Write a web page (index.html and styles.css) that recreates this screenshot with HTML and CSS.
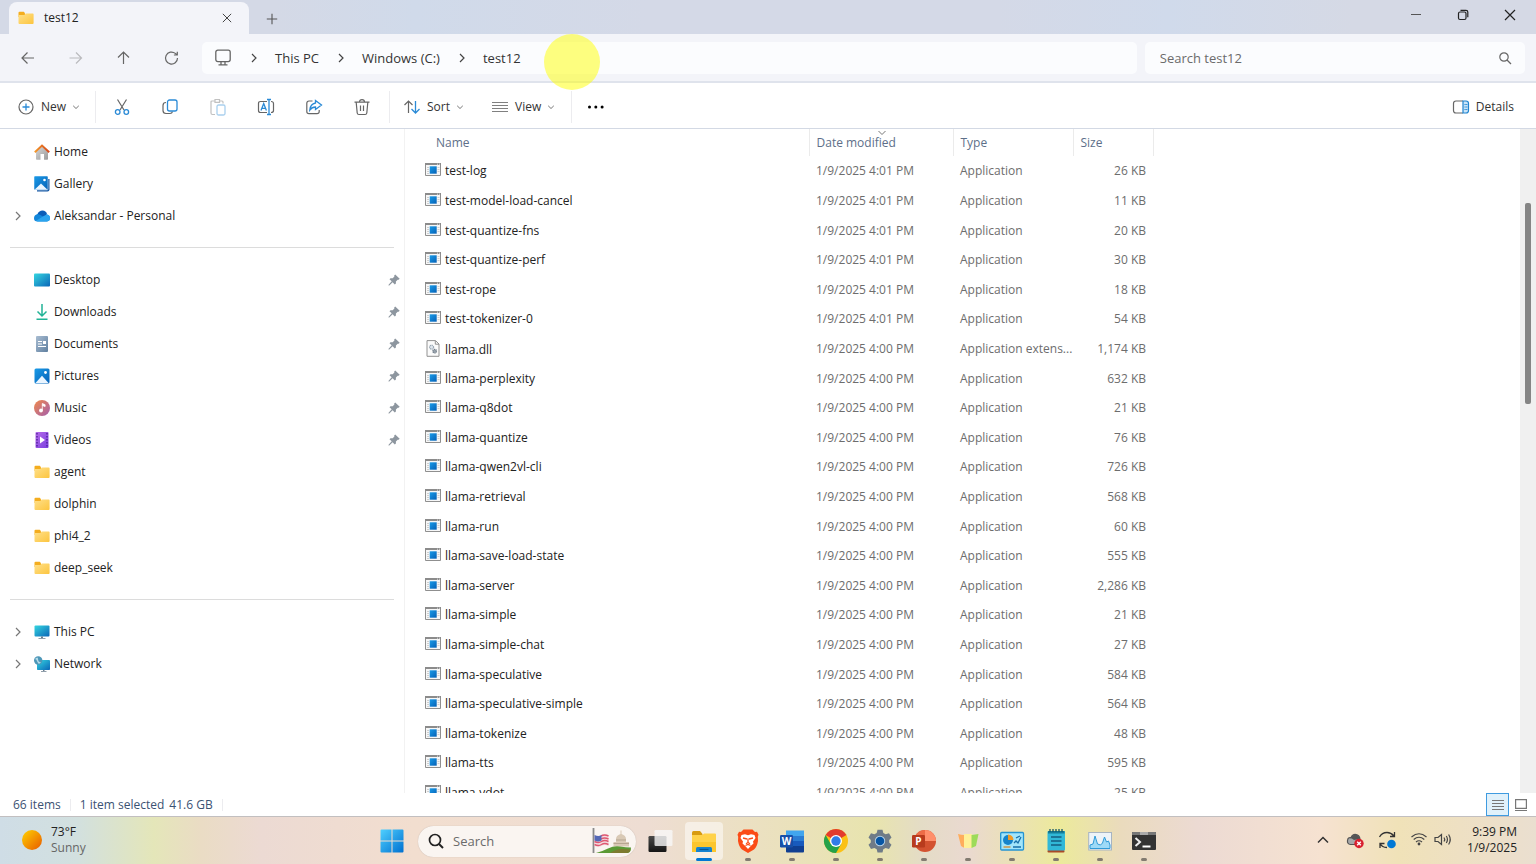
FILE: index.html
```html
<!DOCTYPE html>
<html lang="en">
<head>
<meta charset="utf-8">
<title>test12 - File Explorer</title>
<link rel="stylesheet" href="styles.css">
</head>
<body>
<svg class="defs" aria-hidden="true">
  <defs>
    <linearGradient id="gFolder" x1="0" y1="0" x2="1" y2="1"><stop offset="0" stop-color="#ffe08a"/><stop offset="1" stop-color="#fcc53f"/></linearGradient>
    <linearGradient id="gTeal" x1="0" y1="0" x2="1" y2="1"><stop offset="0" stop-color="#35d6e0"/><stop offset="1" stop-color="#0a66b8"/></linearGradient>
    <linearGradient id="gBlue" x1="0" y1="0" x2="1" y2="1"><stop offset="0" stop-color="#1a9be8"/><stop offset="1" stop-color="#0460b6"/></linearGradient>
    <linearGradient id="gHome" x1="0" y1="0" x2="1" y2="1"><stop offset="0" stop-color="#d8d8d8"/><stop offset="1" stop-color="#9b9b9b"/></linearGradient>
    <linearGradient id="gRoof" x1="0" y1="0" x2="1" y2="0"><stop offset="0" stop-color="#f59a2a"/><stop offset="1" stop-color="#d4471c"/></linearGradient>
    <linearGradient id="gMusic" x1="0" y1="0" x2="1" y2="1"><stop offset="0" stop-color="#f0894a"/><stop offset="1" stop-color="#a45fae"/></linearGradient>
    <linearGradient id="gVideo" x1="0" y1="0" x2="1" y2="1"><stop offset="0" stop-color="#b56ae8"/><stop offset="1" stop-color="#7a3fe0"/></linearGradient>
    <linearGradient id="gDoc" x1="0" y1="0" x2="1" y2="1"><stop offset="0" stop-color="#a9bdd2"/><stop offset="1" stop-color="#5f7f9f"/></linearGradient>
    <linearGradient id="gSun" x1="0" y1="0" x2="1" y2="1"><stop offset="0" stop-color="#ffd200"/><stop offset="1" stop-color="#e85a00"/></linearGradient>
    <linearGradient id="gWin" x1="0" y1="0" x2="1" y2="1"><stop offset="0" stop-color="#4fd0ff"/><stop offset="1" stop-color="#0070d0"/></linearGradient>
    <linearGradient id="gDark" x1="0" y1="0" x2="0" y2="1"><stop offset="0" stop-color="#4a4a4a"/><stop offset="1" stop-color="#151515"/></linearGradient>
  </defs>
  <symbol id="folder" viewBox="0 0 16 16"><path d="M.500 2.800q0-1 1-1h4.300l1.200 1.500V7H.5z" fill="#f4ad1e"/><path d="M.5 5h5.800l1.500-1.500h7q.8 0 .8.800v8.800q0 .9-.9.900H1.400q-.9 0-.9-.9z" fill="url(#gFolder)"/></symbol>
  <symbol id="exe" viewBox="0 0 16 14"><path d="M.5.500h15v12H.5z" fill="#f7f7f7" stroke="#8f8f8f"/><path d="M0 0h16v2H0z" fill="#8b8b8b"/><path d="M12 .7h1v.8h-1zM14 .7h1v.8h-1z" fill="#fff"/><path d="M4.700 3.300h7v7.400h-7z" fill="url(#gBlue)"/><path d="M2 4.500h2M2 6.500h2M2 8.500h2M2 10.500h2M12.500 4.500h2M12.500 6.500h2M12.500 8.500h2" stroke="#c4c4c4" stroke-width=".8"/></symbol>
  <symbol id="dll" viewBox="0 0 16 17"><path d="M2 .6h8.500L14 4v12.300H2z" fill="#fbfbfb" stroke="#929292"/><path d="M10.300.8V4.200H14" fill="none" stroke="#929292"/><circle cx="6.600" cy="7.200" r="2" fill="#dde5ec" stroke="#9aa7b3" stroke-width="1.200" stroke-dasharray="1.200 .5"/><circle cx="9.700" cy="11.200" r="1.800" fill="#9aa5af" stroke="#6f7b87" stroke-width="1.200" stroke-dasharray="1.200 .5"/></symbol>
  <symbol id="pin" viewBox="0 0 12 12"><path d="M7.200.4 11.700 4.800 10.600 5.800 9.700 5.700 7.900 7.500 7.900 9.600 6.800 10.500 4.600 8.300 1.300 11.400.500 11.400.6 10.700 3.700 7.300 1.500 5.300 2.500 4.200 4.700 4.200 6.400 2.500 6.200 1.400z" fill="#8d969f"/></symbol>
  <symbol id="chev" viewBox="0 0 10 10"><path d="M3 1l4 4-4 4" fill="none" stroke="currentColor" stroke-width="1.200"/></symbol>
  <symbol id="down" viewBox="0 0 8 8"><path d="M1.200 2.800 4 5.500l2.800-2.700" fill="none" stroke="#777" stroke-width="1"/></symbol>
  <symbol id="cross" viewBox="0 0 12 12"><path d="M1 1l10 10M11 1L1 11" fill="none" stroke="currentColor" stroke-width="1.200"/></symbol>
</svg>

<div class="window">
  <header class="titlebar">
    <div class="tab">
      <svg class="i16"><use href="#folder"/></svg>
      <span class="tab-name">test12</span>
      <button class="plain" aria-label="Close tab"><svg class="i10"><use href="#cross"/></svg></button>
    </div>
    <button class="plain new-tab" aria-label="New tab"><svg class="i12" viewBox="0 0 12 12"><path d="M6 .8v10.400M.8 6h10.400" stroke="#555" stroke-width="1.100"/></svg></button>
    <div class="window-buttons">
      <button class="plain" aria-label="Minimize"><svg class="i12" viewBox="0 0 12 12"><path d="M1 5.500h10" stroke="#555" stroke-width="1"/></svg></button>
      <button class="plain" aria-label="Restore"><svg class="i12" viewBox="0 0 12 12"><rect x="1.500" y="3" width="7.500" height="7.500" rx="1.500" fill="none" stroke="#222" stroke-width="1.200"/><path d="M3.500 1.300H9q1.800 0 1.800 1.800v5.200" fill="none" stroke="#222" stroke-width="1.200"/></svg></button>
      <button class="plain" aria-label="Close"><svg class="i12"><use href="#cross"/></svg></button>
    </div>
  </header>

  <nav class="navbar" aria-label="Navigation">
    <div class="history">
      <button class="plain" aria-label="Back"><svg class="i16" viewBox="0 0 16 16"><path d="M14 8H2M7.500 2.500 2 8l5.500 5.500" class="ln"/></svg></button>
      <button class="plain" aria-label="Forward" disabled><svg class="i16 faded" viewBox="0 0 16 16"><path d="M1.500 8H13.500M8 2.500 13.500 8l-5.500 5.500" class="ln"/></svg></button>
      <button class="plain" aria-label="Up"><svg class="i16" viewBox="0 0 16 16"><path d="M7.500 14V2M2 7.500 7.500 2l5.500 5.500" class="ln"/></svg></button>
      <button class="plain" aria-label="Refresh"><svg class="i16" viewBox="0 0 16 16"><path d="M13.500 8A6 6 0 1 1 11.300 3.400L13.200 5M13.300 1.700V5H9.900" class="ln"/></svg></button>
    </div>
    <div class="address">
      <svg class="i18" viewBox="0 0 18 18"><rect x="1.800" y="1.200" width="14.400" height="11.400" rx="2" fill="none" stroke="#666" stroke-width="1.300"/><path d="M7 12.600v3M11 12.600v3M4.500 15.800h9" stroke="#666" stroke-width="1.300" fill="none"/></svg>
      <svg class="i10 sep"><use href="#chev"/></svg>
      <button class="plain">This PC</button>
      <svg class="i10 sep"><use href="#chev"/></svg>
      <button class="plain">Windows (C:)</button>
      <svg class="i10 sep"><use href="#chev"/></svg>
      <button class="plain">test12</button>
      <span class="pointer-halo"></span>
    </div>
    <div class="search">
      <input type="search" placeholder="Search test12" aria-label="Search test12">
      <svg class="i14" viewBox="0 0 14 14"><circle cx="6" cy="6" r="4.200" class="ln"/><path d="M9 9l4 4" class="ln"/></svg>
    </div>
  </nav>

  <div class="toolbar" role="toolbar">
    <button class="tool new"><svg class="i18" viewBox="0 0 18 18"><circle cx="9" cy="9" r="7" class="ln"/><path d="M9 5.500v7M5.500 9h7" class="bl"/></svg>New<svg class="i8"><use href="#down"/></svg></button>
    <span class="rule"></span>
    <div class="actions">
      <button class="plain" aria-label="Cut"><svg class="i18" viewBox="0 0 18 18"><path d="M4.500 1.500 11 12M13.500 1.500 7 12" class="ln"/><circle cx="4.700" cy="14" r="2.300" class="bl"/><circle cx="13.300" cy="14" r="2.300" class="bl"/></svg></button>
      <button class="plain" aria-label="Copy"><svg class="i18" viewBox="0 0 18 18"><path d="M5 4.500Q2 4.500 2 7.500V12.500Q2 15.500 5 15.500H9Q11 15.500 11.500 13.500" class="ln"/><rect x="6.500" y="2" width="9.500" height="11" rx="2" class="bl"/></svg></button>
      <button class="plain" aria-label="Paste" disabled><svg class="i18 faded" viewBox="0 0 18 18"><path d="M6 3H3Q2 3 2 4V15Q2 16.500 3.500 16.500H6M11 3h2q1 0 1 1v1.500M6 1.500h4.500v2.800H6z" class="ln"/><rect x="8" y="7" width="8" height="10" rx="1.500" class="bl"/></svg></button>
      <button class="plain" aria-label="Rename"><svg class="i18" viewBox="0 0 18 18"><path d="M10 3.500H3.500Q1.500 3.500 1.500 5.500v7q0 2 2 2H10M14 3.500q2.500 0 2.500 2v7q0 2-2.500 2" class="ln"/><path d="M4 12.500 6.700 5.500 9.400 12.500M5 10.300h3.400M12 1.500v15M10 1.500h4M10 16.500h4" class="bl"/></svg></button>
      <button class="plain" aria-label="Share"><svg class="i18" viewBox="0 0 18 18"><path d="M7.500 3H4Q1.800 3 1.800 5.200v8.300q0 2.200 2.200 2.200h8q2.200 0 2.200-2.200V12" class="ln"/><path d="M10.500 2.500 16.500 7l-6 4.500V9Q7 9 4.800 12 5.300 6 10.500 5z" class="bl"/></svg></button>
      <button class="plain" aria-label="Delete"><svg class="i18" viewBox="0 0 18 18"><path d="M1.500 4.200h15M6.500 4Q6.500 1.700 9 1.700T11.500 4M3.200 4.500l1 10.500q.2 1.500 1.700 1.500h6.200q1.500 0 1.700-1.500l1-10.500M7.500 7.500v5.500M10.500 7.500v5.500" class="ln"/></svg></button>
    </div>
    <span class="rule"></span>
    <button class="tool sort"><svg class="i18" viewBox="0 0 18 18"><path d="M5.500 15V3M1.500 7l4-4 4 4" class="ln"/><path d="M12.500 3v12M8.500 11l4 4 4-4" class="bl"/></svg>Sort<svg class="i8"><use href="#down"/></svg></button>
    <button class="tool view"><svg class="i18" viewBox="0 0 18 18"><path d="M1 4.500h16M1 7.500h16M1 10.500h16M1 13.500h16" stroke="#808080" stroke-width="1.100"/></svg>View<svg class="i8"><use href="#down"/></svg></button>
    <span class="rule"></span>
    <button class="plain more" aria-label="See more"><svg class="i18" viewBox="0 0 18 18"><circle cx="2.500" cy="9" r="1.500"/><circle cx="8.800" cy="9" r="1.500"/><circle cx="15.100" cy="9" r="1.500"/></svg></button>
    <button class="tool details"><svg class="i18" viewBox="0 0 18 18"><path d="M11 3H4Q1.500 3 1.500 5.500v7Q1.500 15 4 15h7" class="ln"/><path d="M11 3h3q2.500 0 2.500 2.500v7Q16.500 15 14 15h-3z" fill="#c9e4f8" stroke="#1f84d0" stroke-width="1.200"/><path d="M12.500 6.500h3M12.500 9h3M12.500 11.500h3" stroke="#1f84d0" stroke-dasharray="1.200 .5"/></svg>Details</button>
  </div>

  <main class="content">
    <nav class="sidebar" aria-label="Folders">
      <ul>
        <li><a href="#"><svg class="i16 icon" viewBox="0 0 16 16"><path d="M2 7.500 8 2l6 5.500V15q0 .8-.8.800H10V10H6.500v5.800H2.800Q2 15.800 2 15z" fill="url(#gHome)"/><path d="M.8 8.200 8 1.500l7.200 6.700" fill="none" stroke="url(#gRoof)" stroke-width="2"/></svg>Home</a></li>
        <li><a href="#"><svg class="i16 icon" viewBox="0 0 16 16"><path d="M3 3h12.500v10.500q0 2-2 2H3z" fill="#1558a5"/><rect x="0" y="0" width="14" height="14" rx="1" fill="url(#gBlue)" stroke="#fff" stroke-width=".5"/><path d="M.5 13.700 7 7.500l6.500 6.200z" fill="#eaf5ff"/><circle cx="10.500" cy="4" r="1.300" fill="#fff"/></svg>Gallery</a></li>
        <li><a href="#"><svg class="i10 tree"><use href="#chev"/></svg><svg class="i16 icon" viewBox="0 0 16 16"><path d="M3.500 6Q5 2.500 8.500 2.500q3.500 0 4.500 3.500l-3 4-7.500-1z" fill="#0a5db8"/><path d="M3.500 13.500Q0 13.500 0 10.300T3.500 6Q5 5.800 9 8.500L13 6.500Q16 7 16 10t-3 3.500z" fill="#1286da"/><path d="M9 8.500 13 6.500Q16 7 16 10t-3 3.500H3.500L2 12.800z" fill="#2ba4ee"/></svg>Aleksandar - Personal</a></li>
      </ul>
      <hr>
      <ul>
        <li><a href="#"><svg class="i16 icon" viewBox="0 0 16 16"><rect y="1.500" width="16" height="13" rx="1" fill="url(#gTeal)"/></svg>Desktop<svg class="i12 pin"><use href="#pin"/></svg></a></li>
        <li><a href="#"><svg class="i16 icon" viewBox="0 0 16 16"><path d="M8 0v12M3.500 7.500 8 12l4.500-4.500M2.500 15.300h11" fill="none" stroke="#22b396" stroke-width="1.500"/></svg>Downloads<svg class="i12 pin"><use href="#pin"/></svg></a></li>
        <li><a href="#"><svg class="i16 icon" viewBox="0 0 16 16"><rect x="2" width="12" height="16" rx="1" fill="url(#gDoc)"/><path d="M4 5.500h4M4 8h4M4 10.500h8" stroke="#fff"/><path d="M9 5h3v3H9z" fill="#fff"/></svg>Documents<svg class="i12 pin"><use href="#pin"/></svg></a></li>
        <li><a href="#"><svg class="i16 icon" viewBox="0 0 16 16"><rect x=".5" y=".5" width="15" height="15" rx="1.500" fill="url(#gBlue)"/><path d="M1.500 15 8 7.800 14.500 15z" fill="#eaf5ff"/><circle cx="11.500" cy="4.500" r="1.400" fill="#fff"/></svg>Pictures<svg class="i12 pin"><use href="#pin"/></svg></a></li>
        <li><a href="#"><svg class="i16 icon" viewBox="0 0 16 16"><circle cx="8" cy="8" r="8" fill="url(#gMusic)"/><circle cx="7" cy="10.500" r="1.900" fill="#fff"/><path d="M8.300 10.500V3.500l2.800 1.200v1.800L8.300 5.500" fill="#fff" stroke="#fff" stroke-width=".8"/></svg>Music<svg class="i12 pin"><use href="#pin"/></svg></a></li>
        <li><a href="#"><svg class="i16 icon" viewBox="0 0 16 16"><rect x="1.500" width="13" height="16" rx="1" fill="url(#gVideo)"/><path d="M3 1v14M13 1v14" stroke="#4a1e95" stroke-width="1.300" stroke-dasharray="1.500 1.500"/><path d="M6 4.500 11 8l-5 3.500z" fill="#fff"/></svg>Videos<svg class="i12 pin"><use href="#pin"/></svg></a></li>
        <li><a href="#"><svg class="i16 icon"><use href="#folder"/></svg>agent</a></li>
        <li><a href="#"><svg class="i16 icon"><use href="#folder"/></svg>dolphin</a></li>
        <li><a href="#"><svg class="i16 icon"><use href="#folder"/></svg>phi4_2</a></li>
        <li><a href="#"><svg class="i16 icon"><use href="#folder"/></svg>deep_seek</a></li>
      </ul>
      <hr>
      <ul>
        <li><a href="#"><svg class="i10 tree"><use href="#chev"/></svg><svg class="i16 icon" viewBox="0 0 16 16"><rect x=".5" y="1.500" width="15" height="11" rx="1" fill="url(#gTeal)"/><path d="M7 12.500h2v1.500h2.500v.8h-7V14H7z" fill="#6c7f8f"/></svg>This PC</a></li>
        <li><a href="#"><svg class="i10 tree"><use href="#chev"/></svg><svg class="i16 icon" viewBox="0 0 16 16"><rect x="3" y="4" width="13" height="10" rx=".8" fill="url(#gTeal)"/><path d="M9 14h1.500v1h2v.8h-5.500V15H9z" fill="#6c7f8f"/><circle cx="4.200" cy="4.500" r="4.200" fill="#4e97b8"/><path d="M1 3Q4 0 4 3T7 6.500Q4.500 9 3.500 6T1 3z" fill="#b7dce9"/></svg>Network</a></li>
      </ul>
    </nav>

    <section class="files">
      <table>
        <colgroup><col class="c-name"><col class="c-date"><col class="c-type"><col class="c-size"></colgroup>
        <thead><tr><th>Name</th><th><svg class="i8 sorted" viewBox="0 0 8 8"><path d="M.5 2 4 5.500 7.500 2" fill="none" stroke="#777"/></svg>Date modified</th><th>Type</th><th>Size</th></tr></thead>
        <tbody>
          <tr><td><svg class="exe"><use href="#exe"/></svg>test-log</td><td>1/9/2025 4:01 PM</td><td>Application</td><td>26 KB</td></tr>
          <tr><td><svg class="exe"><use href="#exe"/></svg>test-model-load-cancel</td><td>1/9/2025 4:01 PM</td><td>Application</td><td>11 KB</td></tr>
          <tr><td><svg class="exe"><use href="#exe"/></svg>test-quantize-fns</td><td>1/9/2025 4:01 PM</td><td>Application</td><td>20 KB</td></tr>
          <tr><td><svg class="exe"><use href="#exe"/></svg>test-quantize-perf</td><td>1/9/2025 4:01 PM</td><td>Application</td><td>30 KB</td></tr>
          <tr><td><svg class="exe"><use href="#exe"/></svg>test-rope</td><td>1/9/2025 4:01 PM</td><td>Application</td><td>18 KB</td></tr>
          <tr><td><svg class="exe"><use href="#exe"/></svg>test-tokenizer-0</td><td>1/9/2025 4:01 PM</td><td>Application</td><td>54 KB</td></tr>
          <tr><td><svg class="dll"><use href="#dll"/></svg>llama.dll</td><td>1/9/2025 4:00 PM</td><td>Application extens...</td><td>1,174 KB</td></tr>
          <tr><td><svg class="exe"><use href="#exe"/></svg>llama-perplexity</td><td>1/9/2025 4:00 PM</td><td>Application</td><td>632 KB</td></tr>
          <tr><td><svg class="exe"><use href="#exe"/></svg>llama-q8dot</td><td>1/9/2025 4:00 PM</td><td>Application</td><td>21 KB</td></tr>
          <tr><td><svg class="exe"><use href="#exe"/></svg>llama-quantize</td><td>1/9/2025 4:00 PM</td><td>Application</td><td>76 KB</td></tr>
          <tr><td><svg class="exe"><use href="#exe"/></svg>llama-qwen2vl-cli</td><td>1/9/2025 4:00 PM</td><td>Application</td><td>726 KB</td></tr>
          <tr><td><svg class="exe"><use href="#exe"/></svg>llama-retrieval</td><td>1/9/2025 4:00 PM</td><td>Application</td><td>568 KB</td></tr>
          <tr><td><svg class="exe"><use href="#exe"/></svg>llama-run</td><td>1/9/2025 4:00 PM</td><td>Application</td><td>60 KB</td></tr>
          <tr><td><svg class="exe"><use href="#exe"/></svg>llama-save-load-state</td><td>1/9/2025 4:00 PM</td><td>Application</td><td>555 KB</td></tr>
          <tr><td><svg class="exe"><use href="#exe"/></svg>llama-server</td><td>1/9/2025 4:00 PM</td><td>Application</td><td>2,286 KB</td></tr>
          <tr><td><svg class="exe"><use href="#exe"/></svg>llama-simple</td><td>1/9/2025 4:00 PM</td><td>Application</td><td>21 KB</td></tr>
          <tr><td><svg class="exe"><use href="#exe"/></svg>llama-simple-chat</td><td>1/9/2025 4:00 PM</td><td>Application</td><td>27 KB</td></tr>
          <tr><td><svg class="exe"><use href="#exe"/></svg>llama-speculative</td><td>1/9/2025 4:00 PM</td><td>Application</td><td>584 KB</td></tr>
          <tr><td><svg class="exe"><use href="#exe"/></svg>llama-speculative-simple</td><td>1/9/2025 4:00 PM</td><td>Application</td><td>564 KB</td></tr>
          <tr><td><svg class="exe"><use href="#exe"/></svg>llama-tokenize</td><td>1/9/2025 4:00 PM</td><td>Application</td><td>48 KB</td></tr>
          <tr><td><svg class="exe"><use href="#exe"/></svg>llama-tts</td><td>1/9/2025 4:00 PM</td><td>Application</td><td>595 KB</td></tr>
          <tr><td><svg class="exe"><use href="#exe"/></svg>llama-vdot</td><td>1/9/2025 4:00 PM</td><td>Application</td><td>25 KB</td></tr>
        </tbody>
      </table>
    </section>
    <div class="scrollbar"><div class="thumb"></div></div>
  </main>

  <footer class="status">
    <span>66 items</span><span class="rule small"></span><span class="selected">1 item selected</span><span>41.6 GB</span><span class="rule small"></span>
    <div class="layouts">
      <button class="layout on" aria-label="Details layout"><svg class="i12" viewBox="0 0 12 12"><path d="M0 1.500h12M0 4.500h12M0 7.500h12M0 10.500h12" stroke="#777"/></svg></button>
      <button class="layout" aria-label="Large icons layout"><svg class="i12" viewBox="0 0 12 12"><path d="M.6.600h10.800v8.800H.6zM0 11.500h12" fill="none" stroke="#777" stroke-width="1.200"/></svg></button>
    </div>
  </footer>
</div>

<div class="taskbar">
  <button class="weather">
    <svg class="i20" viewBox="0 0 20 20"><circle cx="10" cy="10" r="10" fill="url(#gSun)"/></svg>
    <span class="weather-text"><span>73°F</span><span class="muted">Sunny</span></span>
  </button>
  <div class="apps">
    <button class="app" aria-label="Start"><svg class="i24" viewBox="0 0 24 24"><path d="M.5 1.500q0-1 1-1h10v11H.5zM12.500.500h10q1 0 1 1v10h-11zM.5 12.500h11v11h-10q-1 0-1-1zM12.500 12.500h11v10q0 1-1 1h-10z" fill="url(#gWin)"/></svg></button>
    <div class="task-search">
      <svg class="i16" viewBox="0 0 16 16"><circle cx="7" cy="7" r="5.500" fill="none" stroke="#222" stroke-width="1.700"/><path d="M11 11l4 4" stroke="#222" stroke-width="2"/></svg>
      <input type="search" placeholder="Search" aria-label="Search Windows">
      <svg class="art" viewBox="0 0 40 26"><path d="M24 11q0-3.500 4.500-5V2.500h1V6q4.500 1.500 4.500 5v3h3v4.500H21.500V14H24z" fill="#d9c9b5"/><path d="M24 12h10M21.500 15.500H37" stroke="#a89781" stroke-width=".7"/><path d="M4 25Q10 23.500 16 20.500T28 18.500T39 19.500Q39 24 36 25z" fill="#5b9a35"/><path d="M18 25Q24 21 30 21T38.500 21.500Q38 24.500 35 25z" fill="#7d7b30"/><path d="M1.500 0v25" stroke="#8a8a8a" stroke-width="1.800"/><path d="M2.500 7q4 2 7 0t7 0v11q-4-2-7 0t-7 0z" fill="#f3dce0"/><path d="M2.500 13.500q4 2 7 0t7 0M2.500 16.500q4 2 7 0t7 0M9 8q3.500-2 7.500 0M9 11q3.500-2 7.500 0" stroke="#df5871" stroke-width="1.500" fill="none"/><path d="M2.500 7q4 2 7 0v5.500q-3 2-7 0z" fill="#5468b5"/></svg>
    </div>
    <button class="app" aria-label="Task view"><svg class="i24" viewBox="0 0 24 24"><rect x=".5" y="7" width="18" height="16" rx="1.200" fill="url(#gDark)"/><rect x="6.500" y="1" width="18" height="16" rx="1.200" fill="#f7f7f7" opacity=".8"/></svg></button>
    <button class="app active running" aria-label="File Explorer"><svg class="i26" viewBox="0 0 26 26"><path d="M1 4.500Q1 3 2.500 3H9l2.500 3v4H1z" fill="#d89b10"/><path d="M1 7h10.500L13 5.500h11q1 0 1 1V24H1z" fill="#ffd24a"/><path d="M1 14h24v10H1z" fill="#fcc62e"/><path d="M5 24v-3.500Q5 19 6.500 19h13q1.500 0 1.500 1.500V24z" fill="#1583d0"/><path d="M8.500 21.500h9" stroke="#075795" stroke-width="1.200"/></svg></button>
    <button class="app running" aria-label="Brave"><svg class="i24" viewBox="0 0 24 24"><path d="M7.500.5h9L19 3l2-.3 1.500 3-.7 2L22 12q-1 6-4 8.500L12 24 6 20.500Q3 18 2 12l.2-4.300-.7-2L3 2.700 5 3z" fill="#fb4b16"/><path d="M5.500 6 9 5.300l3 .9 3-.9 3.500.7 1 3-2.500 3.500.5 2-2.500 2.300L12 20l-3-3.200L6.500 14.500l.5-2L4.500 9z" fill="#fff"/><path d="M7 9l4 1M17 9l-4 1M12 9.500v4l-2 1.300M12 13.500l2 1.300M9.500 16.500 12 15.500l2.500 1" stroke="#fb4b16" stroke-width="1.300" fill="none"/></svg></button>
    <button class="app running" aria-label="Word"><svg class="i24" viewBox="0 0 24 24"><path d="M6 1.500h18v6H6z" fill="#41a5ee"/><path d="M6 7h18v5.500H6z" fill="#2b7cd3"/><path d="M6 12h18v5.500H6z" fill="#185abd"/><path d="M6 17h18v5.500q0 1-1 1H7q-1 0-1-1z" fill="#103f91"/><rect y="6" width="13" height="12.500" rx="1.200" fill="#174fa8"/><text x="6.500" y="16" class="letter">W</text></svg></button>
    <button class="app running" aria-label="Chrome"><svg class="i24" viewBox="0 0 24 24"><circle cx="12" cy="12" r="12" fill="#fbc116"/><path d="M12 12 1.600 6A12 12 0 0 1 22.400 6z" fill="#e33b2e"/><path d="M12 12 6.800 15 1.600 6A12 12 0 0 0 12 24l5.200-9z" fill="#25a24a"/><circle cx="12" cy="12" r="6" fill="#fff"/><circle cx="12" cy="12" r="4.700" fill="#317ce8"/></svg></button>
    <button class="app running" aria-label="Settings"><svg class="i24" viewBox="0 0 24 24"><path d="M9.500.700h5l.8 3.200 2.300 1.300L21 4.200l2.500 4.200L21.200 11v2.500l2.300 2.300L21 20l-3.400-1-2.300 1.300-.8 3.200h-5l-.8-3.200L6.400 19 3 20 .5 15.800 2.800 13.400V11L.5 8.400 3 4.200l3.400 1 2.300-1.300z" fill="#6f7b87"/><circle cx="12" cy="12" r="5.200" fill="#b9d4e9"/><circle cx="12" cy="12" r="4.300" fill="#0756a4"/></svg></button>
    <button class="app running" aria-label="PowerPoint"><svg class="i24" viewBox="0 0 24 24"><circle cx="13" cy="12" r="11" fill="#d35230"/><path d="M13 1a11 11 0 0 1 11 11H13z" fill="#ff8f6b"/><path d="M2 12a11 11 0 0 1 11-11v11z" fill="#ed6c47"/><rect y="6" width="13" height="12.500" rx="1.200" fill="#b83b1d"/><text x="6.500" y="16" class="letter">P</text></svg></button>
    <button class="app running" aria-label="Map"><svg class="i24" viewBox="0 0 24 24"><path d="M2 5q3 1 6.500 1v13L5 17z" fill="#ffad5c"/><path d="M8 5h8v14H8z" fill="#fff098"/><path d="M15.500 6 22.500 5 20 17l-4.500 2z" fill="#9ddb59"/></svg></button>
    <button class="app running" aria-label="Control Panel"><svg class="i24" viewBox="0 0 24 24"><rect x=".7" y="3.500" width="22.800" height="17.500" rx="1" fill="#a2e5fb" stroke="#2494d3" stroke-width="1.300"/><circle cx="8" cy="11" r="5" fill="#1683cb"/><path d="M8 11V5.500a5.500 5.500 0 0 1 5.500 5.500z" fill="#f29a25"/><path d="M3.500 18h7" stroke="#d98a2a" stroke-width="1.300"/><path d="M13 18h8M14 14l2-2 2 2 3-6M16 9l4-2" stroke="#176fa9" stroke-width="1.300" fill="none"/></svg></button>
    <button class="app running" aria-label="Notepad"><svg class="i24" viewBox="0 0 24 24"><rect x="3.500" y="21" width="17" height="2.500" rx="1" fill="#a84b28"/><rect x="3.500" y="2" width="17.500" height="19.500" rx="1" fill="#31b8d7"/><path d="M4 2h16.500v2.500H4z" fill="#137c98"/><path d="M6 0v3M9 0v3M12 0v3M15 0v3M18 0v3" stroke="#155766" stroke-width="1.300"/><path d="M7 8h10.500M7 12h10.500M7 16h10.500" stroke="#155e81" stroke-width="1.300"/></svg></button>
    <button class="app running" aria-label="Resource Monitor"><svg class="i24" viewBox="0 0 24 24"><rect x=".7" y="3.500" width="22.800" height="17.500" fill="#edf3f8" stroke="#a7b4c2"/><path d="M2 19.500V16l3-1 2-8 2.500 8 3 1 2-2 2-6 2 5 2-1 1.500 4v3.500z" fill="#9edaf7" stroke="#2f9ad7"/></svg></button>
    <button class="app running" aria-label="Terminal"><svg class="i24" viewBox="0 0 24 24"><rect y="3" width="24" height="18" rx="1" fill="#333"/><path d="M0 4q0-1 1-1h22q1 0 1 1v2H0z" fill="#777"/><path d="M8 3h8v3H8z" fill="#aaa"/><path d="M3.500 9 8 13l-4.500 4" stroke="#eee" stroke-width="2" fill="none"/><path d="M10.500 17.500h8" stroke="#fff" stroke-width="2"/></svg></button>
  </div>
  <div class="tray">
    <button class="plain up" aria-label="Show hidden icons"><svg class="i12" viewBox="0 0 12 12"><path d="M1 8.500 6 3.500l5 5" fill="none" stroke="#333" stroke-width="1.500"/></svg></button>
    <button class="plain" aria-label="OneDrive"><svg class="i18" viewBox="0 0 18 18"><path d="M4.500 13.500Q1 13 1.500 9.500T5 6.800Q6.500 3 10 3.500T14 8v5.500z" fill="#a7a9aa" stroke="#555" stroke-width="1.200"/><path d="M5 7Q7 3 10 3.500T14 8L8 9z" fill="#555"/><circle cx="13" cy="12.500" r="4.700" fill="#d8202f"/><path d="M11.200 10.700l3.600 3.600M14.800 10.700l-3.600 3.600" stroke="#fff" stroke-width="1.400"/></svg></button>
    <button class="plain" aria-label="Update"><svg class="i18" viewBox="0 0 18 18"><path d="M1.500 6Q4 1.500 9 1.500 13 1.500 16 5M16.500 1v4.500H12M2 17v-4.500h4.500M2 12.500Q4 16.500 9 16.500" fill="none" stroke="#333" stroke-width="1.300"/><circle cx="13.500" cy="13" r="4.300" fill="#0078d4"/></svg></button>
    <button class="plain net" aria-label="Network and volume">
      <svg class="i18" viewBox="0 0 18 18"><g fill="none" stroke="#444" stroke-width="1.200"><path d="M1.500 6q7.500-6.500 15 0M3.700 8.500q5.300-4.500 10.600 0M6 11q3-2.500 6 0"/></g><circle cx="9" cy="13" r="1.400" fill="#444"/></svg>
      <svg class="i18" viewBox="0 0 18 18"><g fill="none" stroke="#444" stroke-width="1.200"><path d="M1 6.500h3L7.500 3.500v10L4 10.500H1zM10 6.500q1.500 2 0 4M12.300 5q2.300 3.500 0 7M14.600 3.500q3.300 5 0 10"/></g></svg>
    </button>
    <button class="clock"><span>9:39 PM</span><span>1/9/2025</span></button>
  </div>
</div>
</body>
</html>
```
FILE: styles.css
```css
* { box-sizing: border-box; }
body {
  margin: 0;
  height: 100vh;
  display: flex;
  flex-direction: column;
  overflow: hidden;
  background: #fff;
  color: #222;
  font: 12px/16px "Open Sans", "Noto Sans", sans-serif;
}
button, input { font: inherit; color: inherit; border: 0; background: none; padding: 0; }
svg { display: block; flex: none; overflow: visible; }
.defs { position: absolute; width: 0; height: 0; }
.i8 { width: 8px; height: 8px; }
.i10 { width: 10px; height: 10px; }
.i12 { width: 12px; height: 12px; }
.i14 { width: 14px; height: 14px; }
.i16 { width: 16px; height: 16px; }
.i18 { width: 18px; height: 18px; }
.i20 { width: 20px; height: 20px; }
.i24 { width: 24px; height: 24px; }
.i26 { width: 26px; height: 26px; }
.ln { fill: none; stroke: #666; stroke-width: 1.2; }
.bl { fill: none; stroke: #2a8ad6; stroke-width: 1.3; }
.faded { opacity: .4; }
.plain { display: flex; align-items: center; justify-content: center; }
.letter { font: bold 10px "Open Sans", sans-serif; fill: #fff; text-anchor: middle; }

.window { flex: 1; min-height: 0; display: flex; flex-direction: column; }

.titlebar {
  display: flex;
  height: 34px;
  padding-left: 9px;
  background: linear-gradient(90deg, #d4d9e6 18%, #d0daea 27%, #d4d9e7 42%, #d4d9e7 65%, #d0daeb 76%, #d5d9e5 88%);
}
.tab {
  display: flex;
  align-items: center;
  width: 240px;
  margin-top: 2px;
  padding: 0 17px 0 9px;
  border-radius: 8px 8px 0 0;
  background: #f3f4f9;
}
.tab .plain { color: #444; }
.tab-name { flex: 1; padding-left: 10px; font-weight: 500; }
.new-tab { width: 46px; padding-top: 3px; }
.window-buttons { display: flex; margin-left: auto; padding: 0 3px 4px 0; }
.window-buttons button { width: 47px; }

.navbar {
  display: flex;
  align-items: center;
  height: 49px;
  padding: 0 11px 0 4px;
  gap: 8px;
  background: #f3f4f9;
  border-bottom: 2px solid #dfe3ec;
}
.history { display: flex; width: 190px; }
.history button { width: 48px; height: 32px; flex: none; }
.address, .search {
  display: flex;
  align-items: center;
  height: 32px;
  border-radius: 5px;
  background: #fbfcfe;
  color: #333;
  font-size: 13px;
}
.address { position: relative; flex: 1; padding-left: 12px; }
.sep { margin: 0 16px 0 17px; color: #444; }
.pointer-halo {
  position: absolute;
  left: 342px;
  top: -8px;
  width: 56px;
  height: 56px;
  border-radius: 50%;
  background: rgba(255, 255, 0, .5);
  z-index: 1;
}
.search { width: 25%; padding: 0 13px 0 15px; }
.search input { flex: 1; min-width: 0; outline: 0; }
input::placeholder { color: #6b6b6b; opacity: 1; }

.toolbar {
  display: flex;
  align-items: center;
  height: 46px;
  padding: 2px 22px 0 17px;
  border-bottom: 1px solid #d3d9e4;
  color: #333;
}
.tool { display: flex; align-items: center; gap: 6px; }
.rule { width: 1px; height: 32px; background: #ececef; }
.new { width: 78px; }
.actions { display: flex; padding: 0 3px 0 2px; }
.actions button { width: 48px; height: 32px; }
.sort { width: 88px; padding-left: 13px; }
.view { width: 93px; padding-left: 13px; }
.more { width: 48px; }
.details { margin-left: auto; }

.content { flex: 1; min-height: 0; display: flex; }
.sidebar { width: 405px; padding-top: 7px; border-right: 1px solid #f2f2f2; flex: none; overflow: hidden; }
.sidebar ul { list-style: none; margin: 0; padding: 0; }
.sidebar a {
  display: flex;
  align-items: center;
  height: 32px;
  padding: 0 4px 0 13px;
  color: #222;
  text-decoration: none;
}
.tree { color: #777; }
.icon { margin: 0 4px 0 21px; }
.tree + .icon { margin-left: 11px; }
.pin { margin-left: auto; }
.sidebar hr { height: 1px; margin: 15px 10px 16px; border: 0; background: #dcdcdc; }

.files { flex: 1; min-width: 0; overflow: hidden; }
table { table-layout: fixed; width: 748px; border-collapse: collapse; color: #6d6d6d; }
.c-name { width: 404px; }
.c-date { width: 144px; }
.c-type { width: 120px; }
.c-size { width: 80px; }
th, td { padding: 0 7px; text-align: left; font-weight: 400; white-space: nowrap; }
th { position: relative; height: 27px; color: #5d6f89; border-right: 1px solid #ebebeb; }
th:first-child { padding-left: 31px; }
.sorted { position: absolute; left: 68px; top: 0; }
tbody tr { height: 30px; }
/* average pitch of the list rows is just under 30px */
tbody tr:nth-child(5n + 3), tbody tr:nth-child(5n) { height: 29px; }
td:first-child { padding-left: 20px; color: #222; }
td:last-child { text-align: right; }
td svg { display: inline-block; width: 16px; margin-right: 4px; vertical-align: -2px; }
.exe { height: 14px; }
.dll { height: 17px; vertical-align: -3px; }

.scrollbar { width: 16px; padding: 74px 5px 0; background: #f0f0f0; }
.thumb { height: 201px; background: #858585; border-radius: 2px; }

.status { display: flex; align-items: center; height: 23px; padding: 0 4px 0 13px; color: #3b5273; }
.small { height: 12px; margin: 0 9px; }
.selected { padding-right: 5px; }
.layouts { display: flex; margin-left: auto; }
.layout { display: flex; align-items: center; justify-content: center; width: 23px; height: 23px; border: 1px solid transparent; }
.layout.on { background: #e0f1fb; border-color: #3f9be0; }

.taskbar {
  display: grid;
  grid-template-columns: 1fr auto 1fr;
  height: 48px;
  border-top: 1px solid #c2bfc0;
  background: linear-gradient(90deg, #cfdde6 0%, #d2e0df 5%, #e4e6b9 10%, #eadcc4 13%, #ecdad3 17%, #f2decf 27%, #eeddd3 42%, #e8e4ae 57%, #e4dcc6 60%, #ead9d0 63%, #ecea9b 69%, #eadbbd 73%, #ecdad3 78%, #f6e2d1 86%, #f0e2b8 91%, #eddfc8 97%, #eadfd0 100%);
}
.weather { display: flex; align-items: center; gap: 9px; padding: 0 0 2px 22px; text-align: left; }
.weather-text, .clock { display: flex; flex-direction: column; }
.muted { color: #666; }
.apps { display: flex; align-items: center; }
.app { position: relative; display: flex; align-items: center; justify-content: center; width: 44px; height: 48px; }
.active::before { content: ""; position: absolute; left: 3px; top: 5px; width: 38px; height: 38px; border-radius: 4px; background: rgba(255, 255, 255, .5); }
.active svg { position: relative; }
.running::after { content: ""; position: absolute; left: 19px; bottom: 4px; width: 6px; height: 3px; border-radius: 2px; background: #827b70; }
.active::after { left: 14px; width: 16px; background: #0078d4; }
.task-search {
  display: flex;
  align-items: center;
  gap: 9px;
  width: 218px;
  height: 31px;
  margin: 0 2px 0 4px;
  padding: 0 4px 0 10px;
  border-radius: 16px;
  background: #faf5f1;
  box-shadow: 0 0 1px #b9aaa0;
  font-size: 13px;
}
.task-search input { flex: 1; min-width: 0; outline: 0; }
.art { width: 40px; height: 26px; }
.tray { display: flex; align-items: center; justify-content: flex-end; padding: 0 19px 2px 0; }
.tray .plain { width: 32px; }
.tray .net { width: 42px; gap: 6px; margin: 0 15px 0 7px; }
.clock { text-align: right; }
```
